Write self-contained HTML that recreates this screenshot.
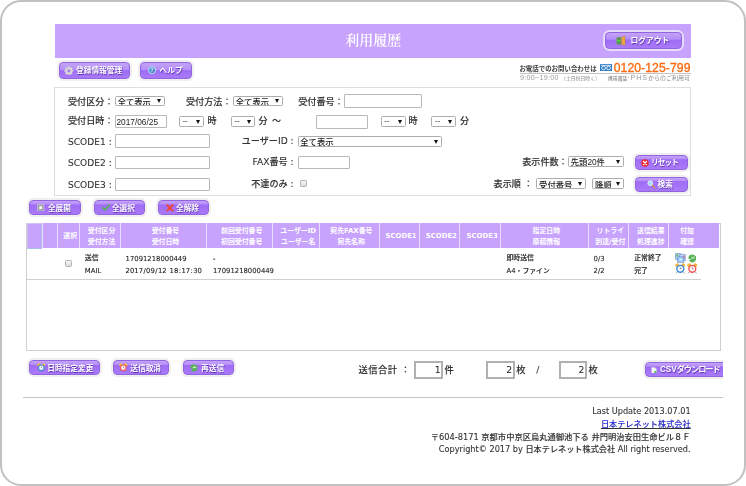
<!DOCTYPE html>
<html lang="ja">
<head>
<meta charset="utf-8">
<title>利用履歴</title>
<style>
html,body{margin:0;padding:0;background:#fff;}
body{width:746px;height:486px;overflow:hidden;position:relative;
  font-family:"DejaVu Sans","Noto Sans CJK JP",sans-serif;color:#333;}
#frame{position:absolute;left:0;top:0;width:746px;height:486px;box-sizing:border-box;
  border:2px solid #c1c1c1;border-radius:21px;z-index:50;pointer-events:none;}
#clip{position:absolute;left:0;top:0;width:723px;height:486px;overflow:hidden;filter:blur(0.6px);}
.abs{position:absolute;white-space:nowrap;}
.abs svg{display:block;}
#hdr{left:55px;top:24px;width:636.1px;height:34.2px;background:#c8a3fd;}
#title{left:55px;top:24px;width:636.6px;height:34.2px;line-height:34.4px;text-align:center;color:#fff;
  font-family:"Liberation Serif","Noto Serif CJK JP","Noto Serif CJK SC",serif;font-size:14px;font-weight:600;}
.btn{position:absolute;box-sizing:border-box;border:1px solid #9364df;border-radius:4px;
  background:linear-gradient(to top,#a97af8 0,#9f6cf6 8.7px,#b58ef7 9.3px,#c3a3fa 100%);
  box-shadow:0 0 0 2px #efefef;color:#fff;font-weight:bold;font-size:7.7px;white-space:nowrap;
  text-shadow:0.6px 0.7px 0.7px #5b32a8;font-family:"Liberation Sans","Noto Sans CJK JP",sans-serif;overflow:hidden;}
.btn svg{position:absolute;display:block;}
.btn span{position:absolute;display:block;height:10px;line-height:10px;}
#panel{left:54.1px;top:86.9px;width:637.4px;height:109.5px;box-sizing:border-box;border:1px solid #dedede;background:#fff;}
.lbl{position:absolute;white-space:nowrap;font-weight:500;font-size:9.1px;height:12px;line-height:12px;color:#333;-webkit-text-stroke:0.1px #333;}
.inp{position:absolute;box-sizing:border-box;border:1px solid #b8b8b8;border-radius:1px;background:#fff;
  font-family:"Liberation Sans","Noto Sans CJK JP",sans-serif;font-size:8.3px;color:#222;overflow:hidden;white-space:nowrap;}
.sel{position:absolute;box-sizing:border-box;border:1px solid #adadad;border-radius:1.5px;background:#fff;overflow:hidden;white-space:nowrap;
  font-family:"Liberation Sans","Noto Sans CJK JP",sans-serif;font-size:8.3px;font-weight:500;color:#222;}
.sel span{position:absolute;left:1.8px;top:-0.7px;height:12px;line-height:12px;}
.sel i{position:absolute;right:2.9px;top:2.5px;width:0;height:0;border-left:2.7px solid transparent;border-right:2.7px solid transparent;border-top:4.4px solid #111;}
.cb{position:absolute;box-sizing:border-box;width:6.4px;height:6.4px;border:1px solid #b2b2b2;border-radius:1.3px;
  background:linear-gradient(#f6f6f6,#dcdcdc);}
#tbox{left:26.3px;top:222.5px;width:694.5px;height:128.3px;box-sizing:border-box;border:1px solid #cfcfcf;background:#fff;}
#thead{left:27.3px;top:223.4px;width:692.2px;height:24.9px;background:#c8a3fd;}
.vs{position:absolute;top:223.4px;width:1px;height:24.9px;background:#e9dcfd;}
.th{position:absolute;color:#fff;font-weight:bold;font-size:6.9px;height:10px;line-height:10px;text-align:center;white-space:nowrap;
  font-family:"DejaVu Sans","Noto Sans CJK JP",sans-serif;}
.td{position:absolute;color:#222;font-weight:500;-webkit-text-stroke:0.1px #222;font-size:6.85px;height:10px;line-height:10px;white-space:nowrap;
  font-family:"DejaVu Sans","Noto Sans CJK JP",sans-serif;}
.td b{font-weight:normal;padding:0 0.4px;}
.ft{position:absolute;font-weight:500;-webkit-text-stroke:0.1px #333;right:32.4px;text-align:right;font-size:8.17px;height:12px;line-height:12px;color:#333;white-space:nowrap;}
</style>
</head>
<body>
<div id="clip">
<div id="hdr" class="abs"></div><div id="title" class="abs">利用履歴</div>
<div class="btn" style="left:605.2px;top:32.2px;width:77.0px;height:17.1px;font-size:7.8px;background:linear-gradient(to bottom,#c3a3fa 0,#b58ef7 6.3px,#9f6cf6 6.9px,#a97af8 100%);box-shadow:0 0 0 2px #e6dbf9;border-radius:4.5px;"><svg width="9.8" height="9.6" style="left:9.9px;top:2.75px;" viewBox="0 0 20 20"><rect x="1.4" y="2.6" width="9" height="15" fill="#5a8f58" stroke="#8a9a8a" stroke-width="0.8"/><path d="M11.2 2.2 L18.6 0.6 L18.6 19.4 L11.2 17.8 Z" fill="#e9a640" stroke="#c07c22" stroke-width="0.8"/><path d="M0.4 10 L5 6.2 L5 8.4 L9.6 8.4 L9.6 11.6 L5 11.6 L5 13.8 Z" fill="#58c848"/></svg><span style="left:24.2px;top:3.05px;">ログアウト</span></div>
<div class="btn" style="left:58.8px;top:61.6px;width:71.4px;height:17.9px;background:linear-gradient(to bottom,#c3a3fa 0,#b58ef7 7.0px,#9f6cf6 7.6px,#a97af8 100%);"><svg width="9.7" height="9.7" style="left:4.2px;top:3.1px;" viewBox="0 0 20 20"><g fill="#d9d9d2"><circle cx="10" cy="10" r="6.6"/><g id="t"><rect x="8" y="0.6" width="4" height="18.8" rx="1"/></g><rect x="8" y="0.6" width="4" height="18.8" rx="1" transform="rotate(45 10 10)"/><rect x="8" y="0.6" width="4" height="18.8" rx="1" transform="rotate(90 10 10)"/><rect x="8" y="0.6" width="4" height="18.8" rx="1" transform="rotate(135 10 10)"/></g><circle cx="10" cy="10" r="3.2" fill="#a779f0"/></svg><span style="left:16.3px;top:3.85px;">登録情報管理</span></div>
<div class="btn" style="left:139.7px;top:61.6px;width:52.5px;height:17.9px;background:linear-gradient(to bottom,#c3a3fa 0,#b58ef7 7.0px,#9f6cf6 7.6px,#a97af8 100%);"><svg width="8.2" height="8.2" style="left:7.8px;top:3.85px;" viewBox="0 0 16 16"><circle cx="8" cy="8" r="7" fill="#4a9ad8" stroke="#d5e9f8" stroke-width="1.6"/><text x="8" y="11.6" font-size="10" font-weight="bold" text-anchor="middle" fill="#fff" font-family="Liberation Sans, sans-serif">?</text></svg><span style="left:18.9px;top:3.85px;">ヘルプ</span></div>
<div class="abs" style="left:519.4px;top:63.7px;height:9px;font-size:6.45px;line-height:9px;font-weight:bold;color:#3b3b3b;font-family:'Liberation Sans','Noto Sans CJK JP',sans-serif;">お電話でのお問い合わせは</div>
<svg class="abs" style="left:599.7px;top:64px;" width="12.1" height="7.1" viewBox="0 0 24 14"><rect width="24" height="14" rx="1" fill="#2c79c6"/><circle cx="7" cy="7.8" r="3.7" fill="none" stroke="#fff" stroke-width="1.8"/><circle cx="17" cy="7.8" r="3.7" fill="none" stroke="#fff" stroke-width="1.8"/><rect x="2" y="1.6" width="20" height="1.6" fill="#fff"/></svg>
<div class="abs" style="left:613.7px;top:59.6px;height:16px;font-size:12.2px;line-height:16px;color:#fb6a12;-webkit-text-stroke:0.35px #fb6a12;letter-spacing:0.08px;font-family:'Liberation Sans',sans-serif;">0120-125-799</div>
<div class="abs" style="left:519.5px;top:73.3px;width:171px;height:1px;background:#c4c4c4;"></div>
<div class="abs" style="left:520px;top:73.4px;height:10px;line-height:10px;color:#9a9a9a;font-size:7.2px;font-family:'Liberation Sans','Noto Sans CJK JP',sans-serif;"><span style="letter-spacing:0.27px;">9:00~19:00</span><span style="font-size:4.9px;color:#8c8c8c;margin-left:2px;">（土日祝日除く）</span></div>
<div class="abs" style="right:33px;top:73.4px;height:10px;line-height:10px;color:#9a9a9a;font-size:7px;font-family:'Liberation Sans','Noto Sans CJK JP',sans-serif;"><span style="font-size:4.8px;color:#666;">携帯電話</span><span style="letter-spacing:1px;">·PHS</span><span style="font-size:6px;color:#8c8c8c;">からのご利用可</span></div>
<div id="panel" class="abs"></div>
<div class="lbl" style="left:68px;top:95.6px;">受付区分：</div>
<div class="sel" style="left:114.9px;top:95.9px;width:49.7px;height:10.4px;"><span>全て表示</span><i></i></div>
<div class="lbl" style="left:186px;top:95.6px;">受付方法：</div>
<div class="sel" style="left:233px;top:95.9px;width:49.7px;height:10.4px;"><span>全て表示</span><i></i></div>
<div class="lbl" style="left:298.2px;top:95.6px;">受付番号：</div>
<div class="inp" style="left:344.4px;top:94.3px;width:77.3px;height:13.6px;"></div>
<div class="lbl" style="left:68px;top:114.8px;">受付日時：</div>
<div class="inp" style="left:115.1px;top:115.1px;width:51.7px;height:13.4px;line-height:12px;padding-left:0.4px;">2017/06/25</div>
<div class="sel" style="left:178.8px;top:116.2px;width:25.3px;height:11px;font-size:8px;"><span style="top:-1.9px;left:2.6px;">--</span><i style="top:2.9px;"></i></div>
<div class="lbl" style="left:207.6px;top:114.8px;">時</div>
<div class="sel" style="left:230.8px;top:116.2px;width:24.4px;height:11px;font-size:8px;"><span style="top:-1.9px;left:2.6px;">--</span><i style="top:2.9px;"></i></div>
<div class="lbl" style="left:258.6px;top:114.8px;">分</div>
<div class="lbl" style="left:272px;top:114.8px;">～</div>
<div class="inp" style="left:315.5px;top:115.1px;width:52.2px;height:13.5px;"></div>
<div class="sel" style="left:380.5px;top:116.2px;width:25px;height:11px;font-size:8px;"><span style="top:-1.9px;left:2.6px;">--</span><i style="top:2.9px;"></i></div>
<div class="lbl" style="left:408.6px;top:114.8px;">時</div>
<div class="sel" style="left:431.4px;top:116.2px;width:24.8px;height:11px;font-size:8px;"><span style="top:-1.9px;left:2.6px;">--</span><i style="top:2.9px;"></i></div>
<div class="lbl" style="left:460px;top:114.8px;">分</div>
<div class="lbl" style="left:68px;top:136.2px;">SCODE1 :</div>
<div class="inp" style="left:115px;top:134.3px;width:95px;height:13.6px;"></div>
<div class="lbl" style="left:193.6px;width:100px;text-align:right;top:135.4px;">ユーザーID :</div>
<div class="sel" style="left:297.5px;top:136px;width:144px;height:10.6px;"><span>全て表示</span><i></i></div>
<div class="lbl" style="left:68px;top:157.1px;">SCODE2 :</div>
<div class="inp" style="left:115px;top:155.8px;width:95px;height:13.6px;"></div>
<div class="lbl" style="left:193.6px;width:100px;text-align:right;top:156.3px;">FAX番号 :</div>
<div class="inp" style="left:297.5px;top:155.8px;width:52.2px;height:13.6px;"></div>
<div class="lbl" style="left:68px;top:179.1px;">SCODE3 :</div>
<div class="inp" style="left:115px;top:177.8px;width:95px;height:13.6px;"></div>
<div class="lbl" style="left:193.6px;width:100px;text-align:right;top:178.3px;">不達のみ :</div>
<div class="cb" style="left:299.7px;top:180.3px;width:7px;height:7px;"></div>
<div class="lbl" style="left:522.2px;top:155.7px;">表示件数：</div>
<div class="sel" style="left:568px;top:156px;width:56.3px;height:10.6px;"><span>先頭20件</span><i></i></div>
<div class="btn" style="left:634.7px;top:155.2px;width:52.9px;height:14.7px;background:linear-gradient(to bottom,#c3a3fa 0,#b58ef7 3.0px,#9f6cf6 3.6px,#a97af8 100%);"><svg width="8" height="8" style="left:5.7px;top:2.35px;" viewBox="0 0 16 16"><circle cx="8" cy="8" r="7.6" fill="#ea2b35"/><path d="M5 5 L11 11 M11 5 L5 11" stroke="#fff" stroke-width="2.6" stroke-linecap="round"/></svg><span style="left:15.3px;top:1.35px;"><span style="position:static;display:inline;letter-spacing:-0.95px;">リセット</span></span></div>
<div class="lbl" style="left:493.6px;top:177.6px;">表示順 ：</div>
<div class="sel" style="left:536.3px;top:178.2px;width:49.6px;height:10.6px;"><span>受付番号</span><i></i></div>
<div class="sel" style="left:592.2px;top:178.2px;width:32.1px;height:10.6px;"><span>降順</span><i></i></div>
<div class="btn" style="left:634.7px;top:177px;width:52.9px;height:15px;background:linear-gradient(to bottom,#c3a3fa 0,#b58ef7 3.0px,#9f6cf6 3.6px,#a97af8 100%);"><svg width="8.6" height="8.6" style="left:10.9px;top:2.2px;" viewBox="0 0 18 18"><path d="M10.6 10.6 L16 16" stroke="#c98d4a" stroke-width="3" stroke-linecap="round"/><circle cx="6.8" cy="6.8" r="5" fill="#a9d8f4" stroke="#e4f2fb" stroke-width="2"/></svg><span style="left:21.8px;top:2.3px;">検索</span></div>
<div class="btn" style="left:29.4px;top:200.4px;width:52.0px;height:14.5px;background:linear-gradient(to bottom,#c3a3fa 0,#b58ef7 3.2px,#9f6cf6 3.8px,#a97af8 100%);"><svg width="7.4" height="7.4" style="left:7.0px;top:2.55px;" viewBox="0 0 15 15"><rect x="0.8" y="0.8" width="13.4" height="13.4" rx="1.5" fill="#9b9ba6" stroke="#d4d4dc" stroke-width="1.4"/><rect x="4.6" y="4.6" width="5.8" height="5.8" fill="#fff"/></svg><span style="left:17.5px;top:2.25px;">全展開</span></div>
<div class="btn" style="left:93.8px;top:200.4px;width:51.4px;height:14.5px;background:linear-gradient(to bottom,#c3a3fa 0,#b58ef7 3.2px,#9f6cf6 3.8px,#a97af8 100%);"><svg width="8.2" height="7.2" style="left:7.0px;top:2.65px;" viewBox="0 0 17 15"><path d="M1.8 8 L6.4 12.4 L15 2.4" fill="none" stroke="#4db34d" stroke-width="3.4" stroke-linecap="round" stroke-linejoin="round"/></svg><span style="left:17.1px;top:2.25px;">全選択</span></div>
<div class="btn" style="left:157.7px;top:200.4px;width:51.8px;height:14.5px;background:linear-gradient(to bottom,#c3a3fa 0,#b58ef7 3.2px,#9f6cf6 3.8px,#a97af8 100%);"><svg width="7.8" height="7.8" style="left:7.2px;top:2.35px;" viewBox="0 0 15 15"><path d="M2.4 2.4 L12.6 12.6 M12.6 2.4 L2.4 12.6" stroke="#f0453a" stroke-width="3.6" stroke-linecap="round"/></svg><span style="left:17.3px;top:2.25px;">全解除</span></div>
<div id="tbox" class="abs"></div><div id="thead" class="abs"></div>
<div class="abs" style="left:26.8px;top:222.9px;width:14.9px;height:25.8px;box-sizing:border-box;border:1px solid #a9bdf0;border-top-color:#d4c2f6;border-left-color:#c5c0ee;"></div>
<div class="vs" style="left:41.5px;"></div>
<div class="vs" style="left:56.5px;"></div>
<div class="vs" style="left:78.6px;"></div>
<div class="vs" style="left:119.5px;"></div>
<div class="vs" style="left:206.2px;"></div>
<div class="vs" style="left:272.1px;"></div>
<div class="vs" style="left:319.1px;"></div>
<div class="vs" style="left:378.5px;"></div>
<div class="vs" style="left:418.5px;"></div>
<div class="vs" style="left:459px;"></div>
<div class="vs" style="left:500.1px;"></div>
<div class="vs" style="left:587.5px;"></div>
<div class="vs" style="left:628px;"></div>
<div class="vs" style="left:668.4px;"></div>
<div class="th" style="left:59.6px;width:21.1px;top:231.4px;">選択</div>
<div class="th" style="left:81.7px;width:39.9px;top:226.4px;">受付区分</div>
<div class="th" style="left:81.7px;width:39.9px;top:236.7px;">受付方法</div>
<div class="th" style="left:122.6px;width:85.7px;top:226.4px;">受付番号</div>
<div class="th" style="left:122.6px;width:85.7px;top:236.7px;">受付日時</div>
<div class="th" style="left:209.3px;width:64.9px;top:226.4px;">前回受付番号</div>
<div class="th" style="left:209.3px;width:64.9px;top:236.7px;">初回受付番号</div>
<div class="th" style="left:275.2px;width:46.0px;top:226.4px;">ユーザーID</div>
<div class="th" style="left:275.2px;width:46.0px;top:236.7px;">ユーザー名</div>
<div class="th" style="left:322.2px;width:58.4px;top:226.4px;">宛先FAX番号</div>
<div class="th" style="left:322.2px;width:58.4px;top:236.7px;">宛先名称</div>
<div class="th" style="left:381.6px;width:39.0px;top:231.4px;">SCODE1</div>
<div class="th" style="left:421.6px;width:39.5px;top:231.4px;">SCODE2</div>
<div class="th" style="left:462.1px;width:40.1px;top:231.4px;">SCODE3</div>
<div class="th" style="left:503.2px;width:86.4px;top:226.4px;">指定日時</div>
<div class="th" style="left:503.2px;width:86.4px;top:236.7px;">原稿情報</div>
<div class="th" style="left:590.6px;width:39.5px;top:226.4px;">リトライ</div>
<div class="th" style="left:590.6px;width:39.5px;top:236.7px;">到達/受付</div>
<div class="th" style="left:631.1px;width:39.4px;top:226.4px;">送信結果</div>
<div class="th" style="left:631.1px;width:39.4px;top:236.7px;">処理進捗</div>
<div class="th" style="left:671.5px;width:31.2px;top:226.4px;">付加</div>
<div class="th" style="left:671.5px;width:31.2px;top:236.7px;">確認</div>
<div class="cb" style="left:65.1px;top:260.1px;width:7px;height:7px;"></div>
<div class="td" style="left:84.8px;top:253.1px;">送信</div>
<div class="td" style="left:84.8px;top:266.1px;">MAIL</div>
<div class="td" style="left:125.6px;top:254.1px;">17091218000449</div>
<div class="td" style="left:125.6px;top:266.1px;">2017<b>/</b>09<b>/</b>12<b> </b>18<b>:</b>17<b>:</b>30</div>
<div class="td" style="left:213px;top:254.1px;">-</div>
<div class="td" style="left:213px;top:266.1px;">17091218000449</div>
<div class="td" style="left:506.5px;top:253.1px;">即時送信</div>
<div class="td" style="left:506.5px;top:266.1px;">A4・ファイン</div>
<div class="td" style="left:593.6px;top:254.1px;">0/3</div>
<div class="td" style="left:593.6px;top:266.1px;">2/2</div>
<div class="td" style="left:634.2px;top:253.1px;">正常終了</div>
<div class="td" style="left:634.2px;top:266.1px;">完了</div>
<svg class="abs" style="left:675px;top:252.5px;" width="11.2" height="10.8" viewBox="0 0 22 21">
<rect x="0.8" y="0.8" width="11" height="12" rx="1.4" fill="#b9d0f0" stroke="#6f9add" stroke-width="1.5"/>
<rect x="9" y="2.6" width="12" height="12" rx="1.4" fill="#c3d6f2" stroke="#7aa2e0" stroke-width="1.5"/>
<rect x="2.6" y="2.6" width="4" height="4.4" fill="#6cc05c"/><rect x="16" y="5" width="3" height="6.4" fill="#d8707f"/>
<rect x="5.2" y="7.4" width="12" height="12.6" rx="1.4" fill="#a9c8f2" stroke="#5f8fd8" stroke-width="1.5"/>
<rect x="7.4" y="10" width="7.6" height="6" fill="#8fd2fa"/><rect x="8.6" y="11.2" width="5.2" height="3" fill="#e4f5ff"/></svg>
<div class="abs" style="left:687.8px;top:254.3px;"><svg width="8.6" height="8.8" style="" viewBox="0 0 18 18"><path d="M9 0.6 A8.4 8.4 0 1 1 2 13.6 L6.4 10.6 L1 9.6 L0.8 7.2 A8.4 8.4 0 0 1 9 0.6 Z" fill="#57b257"/><path d="M9 2.4 A6.6 6.6 0 0 1 15.4 8 L9 8 Z" fill="#7acb78" opacity="0.7"/><path d="M7.2 7 L12.4 7 L12.4 5.4 L15 8.2 L12.4 11 L12.4 9.4 L7.2 9.4 Z" fill="#d8f2d6" opacity="0.9" transform="rotate(180 10.6 8.2)"/></svg></div>
<div class="abs" style="left:674.6px;top:263.4px;"><svg width="10.6" height="10.8" style="" viewBox="0 0 22 22"><ellipse cx="4.4" cy="4" rx="4.2" ry="3.2" fill="#f4b63a" transform="rotate(-35 4.4 4)"/><ellipse cx="17.6" cy="4" rx="4.2" ry="3.2" fill="#f4b63a" transform="rotate(35 17.6 4)"/><path d="M4.4 18 L2.6 21.4 M17.6 18 L19.4 21.4" stroke="#8b93a0" stroke-width="1.8"/><circle cx="11" cy="11.8" r="8.6" fill="#3f88d8"/><circle cx="11" cy="11.8" r="5.7" fill="#f6f9fc"/><path d="M11 8.4 L11 12 L13.4 12" stroke="#666" stroke-width="1.4" fill="none"/></svg></div>
<div class="abs" style="left:686.8px;top:263.4px;"><svg width="10.6" height="10.8" style="" viewBox="0 0 22 22"><ellipse cx="4.4" cy="4" rx="4.2" ry="3.2" fill="#f4b63a" transform="rotate(-35 4.4 4)"/><ellipse cx="17.6" cy="4" rx="4.2" ry="3.2" fill="#f4b63a" transform="rotate(35 17.6 4)"/><path d="M4.4 18 L2.6 21.4 M17.6 18 L19.4 21.4" stroke="#8b93a0" stroke-width="1.8"/><circle cx="11" cy="11.8" r="8.6" fill="#f05555"/><circle cx="11" cy="11.8" r="5.7" fill="#fcf5f5"/><path d="M11 8.4 L11 12 L13.4 12" stroke="#666" stroke-width="1.4" fill="none"/></svg></div>
<div class="abs" style="left:27.3px;top:278.8px;width:673.3px;height:1px;background:#cfcfcf;"></div>
<div class="btn" style="left:29px;top:360.3px;width:71px;height:15.2px;background:linear-gradient(to bottom,#c3a3fa 0,#b58ef7 3.8px,#9f6cf6 4.4px,#a97af8 100%);"><svg width="8.6" height="9" style="left:6.8px;top:2.1px;" viewBox="0 0 22 22"><ellipse cx="4.4" cy="4" rx="4.2" ry="3.2" fill="#f4b63a" transform="rotate(-35 4.4 4)"/><ellipse cx="17.6" cy="4" rx="4.2" ry="3.2" fill="#f4b63a" transform="rotate(35 17.6 4)"/><path d="M4.4 18 L2.6 21.4 M17.6 18 L19.4 21.4" stroke="#8b93a0" stroke-width="1.8"/><circle cx="11" cy="11.8" r="8.6" fill="#3f88d8"/><circle cx="11" cy="11.8" r="5.7" fill="#f6f9fc"/><path d="M11 8.4 L11 12 L13.4 12" stroke="#666" stroke-width="1.4" fill="none"/></svg><span style="left:17.2px;top:2.6px;">日時指定変更</span></div>
<div class="btn" style="left:112.9px;top:360.3px;width:55.9px;height:15.2px;background:linear-gradient(to bottom,#c3a3fa 0,#b58ef7 3.8px,#9f6cf6 4.4px,#a97af8 100%);"><svg width="8.6" height="9" style="left:5.6px;top:2.1px;" viewBox="0 0 22 22"><ellipse cx="4.4" cy="4" rx="4.2" ry="3.2" fill="#f4b63a" transform="rotate(-35 4.4 4)"/><ellipse cx="17.6" cy="4" rx="4.2" ry="3.2" fill="#f4b63a" transform="rotate(35 17.6 4)"/><path d="M4.4 18 L2.6 21.4 M17.6 18 L19.4 21.4" stroke="#8b93a0" stroke-width="1.8"/><circle cx="11" cy="11.8" r="8.6" fill="#f05555"/><circle cx="11" cy="11.8" r="5.7" fill="#fcf5f5"/><path d="M11 8.4 L11 12 L13.4 12" stroke="#666" stroke-width="1.4" fill="none"/></svg><span style="left:16.4px;top:2.6px;">送信取消</span></div>
<div class="btn" style="left:182.9px;top:360.3px;width:51.6px;height:15.2px;background:linear-gradient(to bottom,#c3a3fa 0,#b58ef7 3.8px,#9f6cf6 4.4px,#a97af8 100%);"><svg width="7.8" height="7.8" style="left:6.5px;top:2.7px;" viewBox="0 0 18 18"><path d="M9 0.6 A8.4 8.4 0 1 1 2 13.6 L6.4 10.6 L1 9.6 L0.8 7.2 A8.4 8.4 0 0 1 9 0.6 Z" fill="#57b257"/><path d="M9 2.4 A6.6 6.6 0 0 1 15.4 8 L9 8 Z" fill="#7acb78" opacity="0.7"/><path d="M7.2 7 L12.4 7 L12.4 5.4 L15 8.2 L12.4 11 L12.4 9.4 L7.2 9.4 Z" fill="#d8f2d6" opacity="0.9" transform="rotate(180 10.6 8.2)"/></svg><span style="left:17.2px;top:2.6px;">再送信</span></div>
<div class="lbl" style="left:358.6px;top:364px;font-size:9.3px;letter-spacing:0.42px;">送信合計 ：</div>
<div class="inp" style="left:414.3px;top:360.7px;width:28.6px;height:18px;border-color:#b0b0b0;border-width:2px;border-radius:0;line-height:14.4px;text-align:right;padding-right:0.3px;font-size:9.3px;font-family:'DejaVu Sans',sans-serif;">1</div>
<div class="lbl" style="left:444.6px;top:364px;font-size:9.3px;">件</div>
<div class="inp" style="left:486.2px;top:360.7px;width:28.4px;height:18px;border-color:#b0b0b0;border-width:2px;border-radius:0;line-height:14.4px;text-align:right;padding-right:0.3px;font-size:9.3px;font-family:'DejaVu Sans',sans-serif;">2</div>
<div class="lbl" style="left:516.3px;top:364px;font-size:9.3px;">枚</div>
<div class="lbl" style="left:536.2px;top:364px;font-size:9.3px;">/</div>
<div class="inp" style="left:558.6px;top:360.7px;width:28.2px;height:18px;border-color:#b0b0b0;border-width:2px;border-radius:0;line-height:14.4px;text-align:right;padding-right:0.3px;font-size:9.3px;font-family:'DejaVu Sans',sans-serif;">2</div>
<div class="lbl" style="left:588.6px;top:364px;font-size:9.3px;">枚</div>
<div class="btn" style="left:644.7px;top:362.4px;width:91.3px;height:15.1px;font-size:8.2px;background:linear-gradient(to bottom,#c3a3fa 0,#b58ef7 3.3px,#9f6cf6 3.9px,#a97af8 100%);"><svg width="6" height="6.6" style="left:5.3px;top:3.25px;" viewBox="0 0 13 15"><path d="M1 1 L8.4 1 L12 4.6 L12 14 L1 14 Z" fill="#f6f6f6" stroke="#cfcfda" stroke-width="1"/><path d="M8.4 1 L8.4 4.6 L12 4.6" fill="#dcdce4"/><circle cx="9.6" cy="11.4" r="2.6" fill="#58c058"/></svg><span style="left:14.2px;top:1.55px;">CSV<span style="position:static;display:inline;letter-spacing:-1.05px;">ダウンロード</span></span></div>
<div class="abs" style="left:23px;top:397px;width:700px;height:1px;background:#c4c4c4;"></div>
<div class="ft" style="top:405.3px;">Last Update 2013.07.01</div>
<div class="ft" style="top:418.2px;color:#2a2ae0;text-decoration:underline;">日本テレネット株式会社</div>
<div class="ft" style="top:431.4px;font-size:8.28px;">〒604-8171 京都市中京区烏丸通御池下る 井門明治安田生命ビル８Ｆ</div>
<div class="ft" style="top:442.8px;">Copyright© 2017 by 日本テレネット株式会社 All right reserved.</div>
</div>
<div id="frame"></div>
</body>
</html>
